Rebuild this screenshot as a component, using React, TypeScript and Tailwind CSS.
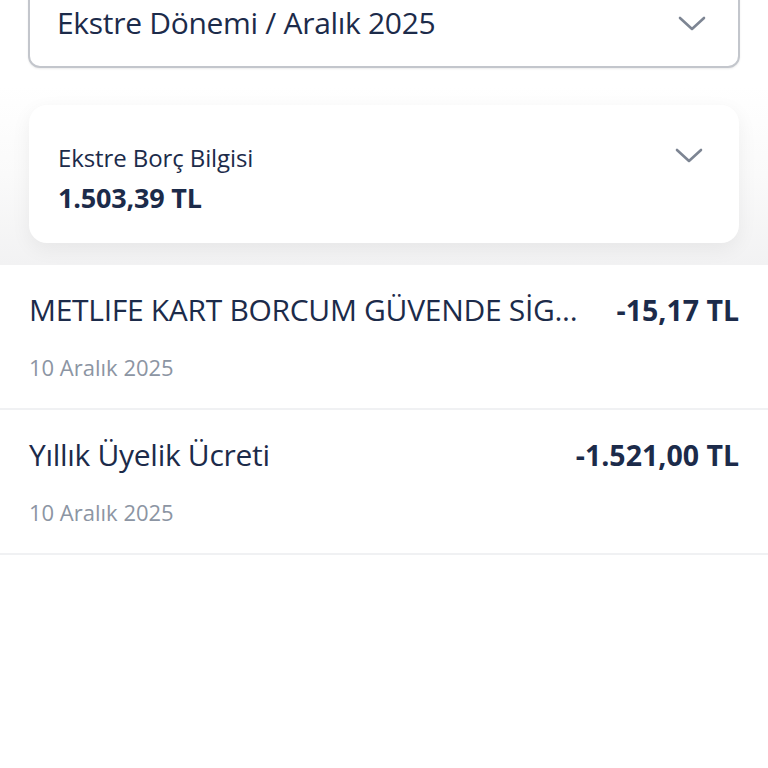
import React from "react";

function Chevron({ className }: { className?: string }) {
  return (
    <svg className={className} viewBox="0 0 28 16" fill="none">
      <path d="M2 2 L14 13 L26 2" stroke="#7d8593" strokeWidth="2.6" strokeLinecap="round" strokeLinejoin="round" />
    </svg>
  );
}

function Row({ title, amount, date }: { title: string; amount: string; date: string }) {
  return (
    <div className="flex flex-col border-b-2 border-[#f0f1f3] px-[29px] pt-[25px] pb-[26px]">
      <div className="flex items-center justify-between gap-4">
        <div className="whitespace-nowrap text-[30px] leading-[40px] text-[#1c2b4a] tracking-[-0.3px]">{title}</div>
        <div className="shrink-0 text-[28.5px] leading-[40px] font-bold text-[#1c2b4a]">{amount}</div>
      </div>
      <div className="mt-[22px] text-[22px] leading-[30px] text-[#8c95a3]">{date}</div>
    </div>
  );
}

export default function App() {
  return (
    <div className="h-[768px] w-[768px] overflow-hidden bg-white" style={{ fontFamily: '"Open Sans", sans-serif' }}>
      <div className="px-[28px] -mt-[20px]">
        <div className="flex h-[88px] items-start justify-between rounded-[12px] border-2 border-[#c3c6cc] bg-white pl-[27px] pr-[32px] pt-[21px] shadow-[0_1px_2px_rgba(0,0,0,0.08)]">
          <span className="text-[30px] leading-[40px] text-[#1c2b4a] tracking-[-0.3px]">Ekstre Dönemi / Aralık 2025</span>
          <Chevron className="mt-[13px] h-[16px] w-[28px]" />
        </div>
      </div>
      <div className="mt-[17px] bg-gradient-to-b from-[#ffffff] via-[#fafafa] to-[#f2f2f3] px-[29px] pt-[20px] pb-[22px]">
        <div className="flex items-start justify-between rounded-[18px] bg-white pl-[29px] pr-[36px] pt-[37px] pb-[27px] shadow-[0_6px_20px_rgba(0,0,0,0.06)]">
          <div className="flex flex-col">
            <span className="text-[24px] leading-[32px] text-[#1c2b4a] tracking-[-0.1px]">Ekstre Borç Bilgisi</span>
            <span className="mt-[6px] text-[27px] leading-[36px] font-bold text-[#1c2b4a] tracking-[-0.2px]">1.503,39 TL</span>
          </div>
          <Chevron className="mt-[6px] h-[16px] w-[28px]" />
        </div>
      </div>
      <Row title="METLIFE KART BORCUM GÜVENDE SİG..." amount="-15,17 TL" date="10 Aralık 2025" />
      <Row title="Yıllık Üyelik Ücreti" amount="-1.521,00 TL" date="10 Aralık 2025" />
    </div>
  );
}
